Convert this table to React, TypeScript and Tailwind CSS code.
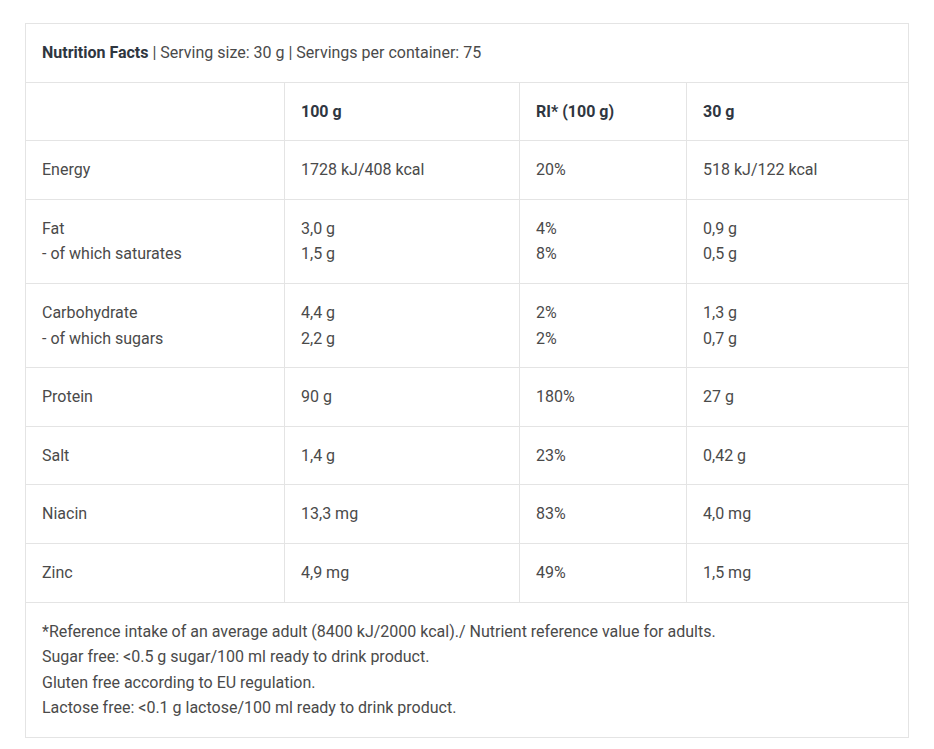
const rows: { label: string[]; per100: string[]; ri: string[]; per30: string[] }[] = [
  { label: ["Energy"], per100: ["1728 kJ/408 kcal"], ri: ["20%"], per30: ["518 kJ/122 kcal"] },
  { label: ["Fat", "- of which saturates"], per100: ["3,0 g", "1,5 g"], ri: ["4%", "8%"], per30: ["0,9 g", "0,5 g"] },
  { label: ["Carbohydrate", "- of which sugars"], per100: ["4,4 g", "2,2 g"], ri: ["2%", "2%"], per30: ["1,3 g", "0,7 g"] },
  { label: ["Protein"], per100: ["90 g"], ri: ["180%"], per30: ["27 g"] },
  { label: ["Salt"], per100: ["1,4 g"], ri: ["23%"], per30: ["0,42 g"] },
  { label: ["Niacin"], per100: ["13,3 mg"], ri: ["83%"], per30: ["4,0 mg"] },
  { label: ["Zinc"], per100: ["4,9 mg"], ri: ["49%"], per30: ["1,5 mg"] },
];

const cell = "border border-[#e4e4e4] px-4 py-4 align-top";

function Lines({ items }: { items: string[] }) {
  return (
    <>
      {items.map((t, i) => (
        <div key={i}>{t}</div>
      ))}
    </>
  );
}

export default function App() {
  return (
    <div className="min-h-screen bg-white pl-[25px] pt-[23px] font-['Roboto',sans-serif] text-[16px] leading-[1.6] text-[#4a4a4a]">
      <table className="w-[883px] table-fixed border-collapse">
        <colgroup>
          <col className="w-[259px]" />
          <col className="w-[235px]" />
          <col className="w-[167px]" />
          <col className="w-[222px]" />
        </colgroup>
        <tbody>
          <tr>
            <td colSpan={4} className={cell}>
              <span className="font-bold text-[#2f3640]">Nutrition Facts</span> | Serving size: 30 g | Servings per
              container: 75
            </td>
          </tr>
          <tr className="font-bold text-[#2f3640]">
            <td className={cell}></td>
            <td className={cell}>100 g</td>
            <td className={cell}>RI* (100 g)</td>
            <td className={cell}>30 g</td>
          </tr>
          {rows.map((r) => (
            <tr key={r.label[0]}>
              <td className={cell}>
                <Lines items={r.label} />
              </td>
              <td className={cell}>
                <Lines items={r.per100} />
              </td>
              <td className={cell}>
                <Lines items={r.ri} />
              </td>
              <td className={cell}>
                <Lines items={r.per30} />
              </td>
            </tr>
          ))}
          <tr>
            <td colSpan={4} className={cell}>
              <div>*Reference intake of an average adult (8400 kJ/2000 kcal)./ Nutrient reference value for adults.</div>
              <div>Sugar free: &lt;0.5 g sugar/100 ml ready to drink product.</div>
              <div>Gluten free according to EU regulation.</div>
              <div>Lactose free: &lt;0.1 g lactose/100 ml ready to drink product.</div>
            </td>
          </tr>
        </tbody>
      </table>
    </div>
  );
}
